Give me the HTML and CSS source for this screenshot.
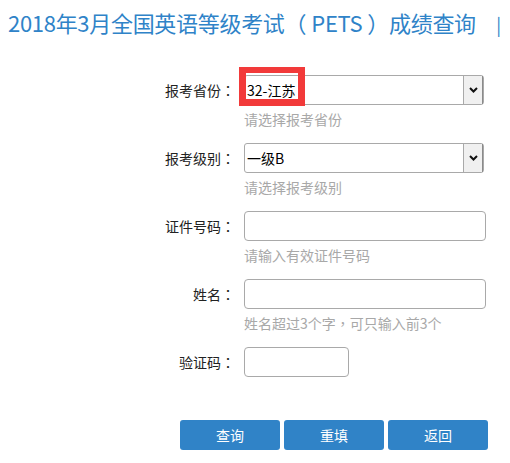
FILE: index.html
```html
<!DOCTYPE html>
<html lang="zh-CN">
<head>
<meta charset="utf-8">
<title>PETS 成绩查询</title>
<link rel="stylesheet" href="styles.css">
</head>
<body>
<div class="title"><span class="title-text">2018年3月全国英语等级考试（<span class="pets">PETS</span>）成绩查询</span><span class="pipe">|</span></div>
<div class="form">
  <div class="row">
    <div class="label">报考省份<span class="p" lang="zh-TW">：</span></div>
    <div class="field">
      <div class="select">
        <span class="select-text">32-江苏</span>
        <span class="select-btn"><svg width="9" height="6" viewBox="0 0 9 6"><path d="M1 1 L4.5 4.5 L8 1" fill="none" stroke="#111" stroke-width="2"/></svg></span>
        <span class="highlight"></span>
      </div>
      <div class="hint">请选择报考省份</div>
    </div>
  </div>
  <div class="row">
    <div class="label">报考级别<span class="p" lang="zh-TW">：</span></div>
    <div class="field">
      <div class="select">
        <span class="select-text">一级B</span>
        <span class="select-btn"><svg width="9" height="6" viewBox="0 0 9 6"><path d="M1 1 L4.5 4.5 L8 1" fill="none" stroke="#111" stroke-width="2"/></svg></span>
      </div>
      <div class="hint">请选择报考级别</div>
    </div>
  </div>
  <div class="row">
    <div class="label">证件号码<span class="p" lang="zh-TW">：</span></div>
    <div class="field">
      <div class="input"></div>
      <div class="hint">请输入有效证件号码</div>
    </div>
  </div>
  <div class="row">
    <div class="label">姓名<span class="p" lang="zh-TW">：</span></div>
    <div class="field">
      <div class="input"></div>
      <div class="hint">姓名超过3个字<span class="p" lang="zh-TW">，</span>可只输入前3个</div>
    </div>
  </div>
  <div class="row">
    <div class="label">验证码<span class="p" lang="zh-TW">：</span></div>
    <div class="field">
      <div class="input small"></div>
    </div>
  </div>
  <div class="buttons">
    <div class="btn">查询</div>
    <div class="btn">重填</div>
    <div class="btn">返回</div>
  </div>
</div>
</body>
</html>
```
FILE: styles.css
```css
html, body {
  margin: 0;
  padding: 0;
  background: #fff;
  font-family: "Noto Sans CJK SC", "Microsoft YaHei", sans-serif;
}
.p {
  font-family: "Noto Sans CJK TC", "Noto Sans CJK SC", sans-serif;
}
.title {
  display: flex;
  justify-content: space-between;
  padding: 7px 9px 0 8px;
  font-size: 22px;
  line-height: 30px;
  height: 30px;
  color: #2f83c8;
}
.title-text {
  letter-spacing: -0.3px;
}
.pets {
  padding: 0 5px;
}
.pipe {
  font-size: 18px;
  padding-top: 2px;
}
.form {
  padding-top: 38px;
}
.row {
  display: flex;
  height: 68px;
}
.label {
  width: 235px;
  text-align: right;
  font-size: 14px;
  line-height: 30px;
  color: #222;
}
.field {
  margin-left: 9px;
  width: 242px;
}
.select {
  position: relative;
  display: flex;
  width: 240px;
  height: 30px;
  box-sizing: border-box;
  border: 1px solid #a9a9a9;
  border-radius: 3px;
}
.select-text {
  flex: 1;
  padding-left: 2px;
  font-size: 14px;
  line-height: 28px;
  color: #000;
}
.select-btn {
  width: 18px;
  background: #f0f0f0;
  border-left: 1px solid #a9a9a9;
  border-right: 1px solid #8a8a8a;
  display: flex;
  align-items: center;
  justify-content: center;
}
.highlight {
  position: absolute;
  left: -6px;
  top: -9px;
  width: 66px;
  height: 39px;
  box-sizing: border-box;
  border-style: solid;
  border-color: #f23a3a;
  border-width: 6px 7px 7px 7px;
}
.input {
  width: 242px;
  height: 30px;
  box-sizing: border-box;
  border: 1px solid #a9a9a9;
  border-radius: 4px;
}
.input.small {
  width: 105px;
}
.hint {
  margin-top: 3px;
  font-size: 14px;
  line-height: 22px;
  color: #a8a8a8;
}
.buttons {
  display: flex;
  gap: 4px;
  margin-left: 180px;
  margin-top: 5px;
}
.btn {
  width: 100px;
  height: 30px;
  background: #3083c7;
  border-radius: 3px;
  color: #fff;
  font-size: 14px;
  line-height: 30px;
  text-align: center;
}
```
